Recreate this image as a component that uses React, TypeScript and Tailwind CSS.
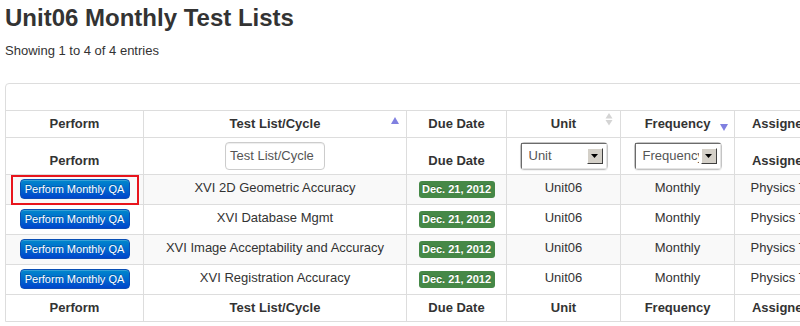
import React from "react";

const font = { fontFamily: '"Liberation Sans", Arial, sans-serif' };

function Up({ color }: { color: string }) {
  return (
    <svg width="8" height="7" viewBox="0 0 8 7">
      <path d="M4 0 L8 7 L0 7 Z" fill={color} />
    </svg>
  );
}
function Down({ color }: { color: string }) {
  return (
    <svg width="8" height="7" viewBox="0 0 8 7">
      <path d="M0 0 L8 0 L4 7 Z" fill={color} />
    </svg>
  );
}
function Both() {
  return (
    <svg width="8" height="13" viewBox="0 0 8 13">
      <path d="M4 0 L7.5 5.5 L0.5 5.5 Z" fill="#d4d4d4" />
      <path d="M0.5 7 L7.5 7 L4 12.5 Z" fill="#d4d4d4" />
    </svg>
  );
}

function Select({ label }: { label: string }) {
  return (
    <div className="w-[88px] h-[28px] rounded-[4px] border border-[#c4c4c4] bg-white shadow-[0_1px_1px_rgba(0,0,0,0.06)]">
      <div className="h-full flex items-center border-t border-l border-[#6b6b6b] border-r-[#e4e4e4] border-b-[#e4e4e4] border-r border-b pl-[7px] pr-[3px]">
        <span className="flex-1 min-w-0 overflow-hidden whitespace-nowrap text-[13px] leading-[18px] text-[#555]">
          {label}
        </span>
        <div className="ml-[2px] w-[16px] h-[16px] bg-[#d4d0c8] border border-t-white border-l-white border-r-[#404040] border-b-[#404040] flex items-center justify-center shrink-0">
          <svg width="7" height="4" viewBox="0 0 7 4">
            <path d="M0 0 L7 0 L3.5 4 Z" fill="#000" />
          </svg>
        </div>
      </div>
    </div>
  );
}

const W = ["w-[137px]", "w-[263px]", "w-[100px]", "w-[114px]", "w-[114px]", "w-[112px]", "w-[100px]"];

function Cell({
  i,
  children,
  className = "",
}: {
  i: number;
  children?: React.ReactNode;
  className?: string;
}) {
  return (
    <div
      className={`${W[i]} shrink-0 ${i > 0 ? "border-l border-[#ddd]" : ""} relative flex justify-center ${className}`}
    >
      {children}
    </div>
  );
}

const headers = ["Perform", "Test List/Cycle", "Due Date", "Unit", "Frequency", "Assigned To", "Last Done"];

const rows = [
  "XVI 2D Geometric Accuracy",
  "XVI Database Mgmt",
  "XVI Image Acceptability and Accuracy",
  "XVI Registration Accuracy",
];

export default function App() {
  return (
    <div
      className="w-[800px] h-[326px] overflow-hidden bg-white text-[#333] pl-[5px]"
      style={font}
    >
      <h1 className="pt-[3px] text-[24px] leading-[30px] font-bold text-[#333] whitespace-nowrap">
        Unit06 Monthly Test Lists
      </h1>
      <div className="mt-[9px] text-[13px] leading-[18px] whitespace-nowrap">
        Showing 1 to 4 of 4 entries
      </div>
      <div className="mt-[23px] w-[960px] border border-[#ddd] rounded-tl-[4px] text-[13px] leading-[18px]">
        <div className="h-[27px] border-b border-[#ddd]" />
        {/* header row */}
        <div className="flex h-[27px] border-b border-[#ddd] font-bold">
          {headers.map((h, i) => (
            <Cell key={h} i={i} className="pt-[4px] items-start whitespace-nowrap">
              {h}
              {i === 1 && (
                <div className="absolute right-[7px] top-[6px] flex">
                  <Up color="#8080e0" />
                </div>
              )}
              {i === 3 && (
                <div className="absolute right-[7px] top-[2px] flex">
                  <Both />
                </div>
              )}
              {i === 4 && (
                <div className="absolute right-[6px] top-[13px] flex">
                  <Down color="#8080e0" />
                </div>
              )}
            </Cell>
          ))}
        </div>
        {/* filter row */}
        <div className="flex h-[37px] border-b border-[#ddd] font-bold">
          <Cell i={0} className="pt-[14px] items-start">Perform</Cell>
          <Cell i={1} className="items-center">
            <div className="w-[100px] h-[28px] border border-[#ccc] rounded-[4px] px-[4px] py-[4px] font-normal text-[#555] whitespace-nowrap overflow-hidden shadow-[inset_0_1px_1px_rgba(0,0,0,0.075)]">
              Test List/Cycle
            </div>
          </Cell>
          <Cell i={2} className="pt-[14px] items-start">Due Date</Cell>
          <Cell i={3} className="items-center">
            <div className="font-normal">
              <Select label="Unit" />
            </div>
          </Cell>
          <Cell i={4} className="items-center">
            <div className="font-normal">
              <Select label="Frequency" />
            </div>
          </Cell>
          <Cell i={5} className="pt-[14px] items-start whitespace-nowrap">Assigned To</Cell>
          <Cell i={6} className="pt-[14px] items-start whitespace-nowrap">Last Done</Cell>
        </div>
        {/* data rows */}
        {rows.map((r, idx) => (
          <div
            key={r}
            className={`flex h-[30px] border-b border-[#ddd] ${idx % 2 === 0 ? "bg-[#f9f9f9]" : "bg-white"}`}
          >
            <Cell i={0} className="pt-[4px] items-start">
              <button className="w-[110px] h-[20px] rounded-[4px] border border-[#0a4fb5] bg-gradient-to-b from-[#0088cc] to-[#0044cc] text-white text-[11px] leading-[18px] whitespace-nowrap [text-shadow:0_-1px_0_rgba(0,0,0,0.25)] shadow-[inset_0_1px_0_rgba(255,255,255,0.2)]">
                Perform Monthly QA
              </button>
              {idx === 0 && (
                <div className="absolute left-[5px] top-0 w-[128px] h-[30px] border-2 border-[#e8141c]" />
              )}
            </Cell>
            <Cell i={1} className="pt-[4px] items-start whitespace-nowrap">{r}</Cell>
            <Cell i={2} className="pt-[6px] items-start">
              <span className="w-[76px] h-[17px] rounded-[3px] bg-[#468847] text-white font-bold text-[11px] leading-[17px] text-center whitespace-nowrap [text-shadow:0_-1px_0_rgba(0,0,0,0.25)]">
                Dec. 21, 2012
              </span>
            </Cell>
            <Cell i={3} className="pt-[4px] items-start">Unit06</Cell>
            <Cell i={4} className="pt-[4px] items-start">Monthly</Cell>
            <Cell i={5} className="pt-[4px] items-start whitespace-nowrap">Physics Team</Cell>
            <Cell i={6} className="pt-[4px] items-start whitespace-nowrap">Never</Cell>
          </div>
        ))}
        {/* footer row */}
        <div className="flex h-[26px] font-bold">
          {headers.map((h, i) => (
            <Cell key={h} i={i} className="pt-[4px] items-start whitespace-nowrap">
              {h}
            </Cell>
          ))}
        </div>
      </div>
    </div>
  );
}
